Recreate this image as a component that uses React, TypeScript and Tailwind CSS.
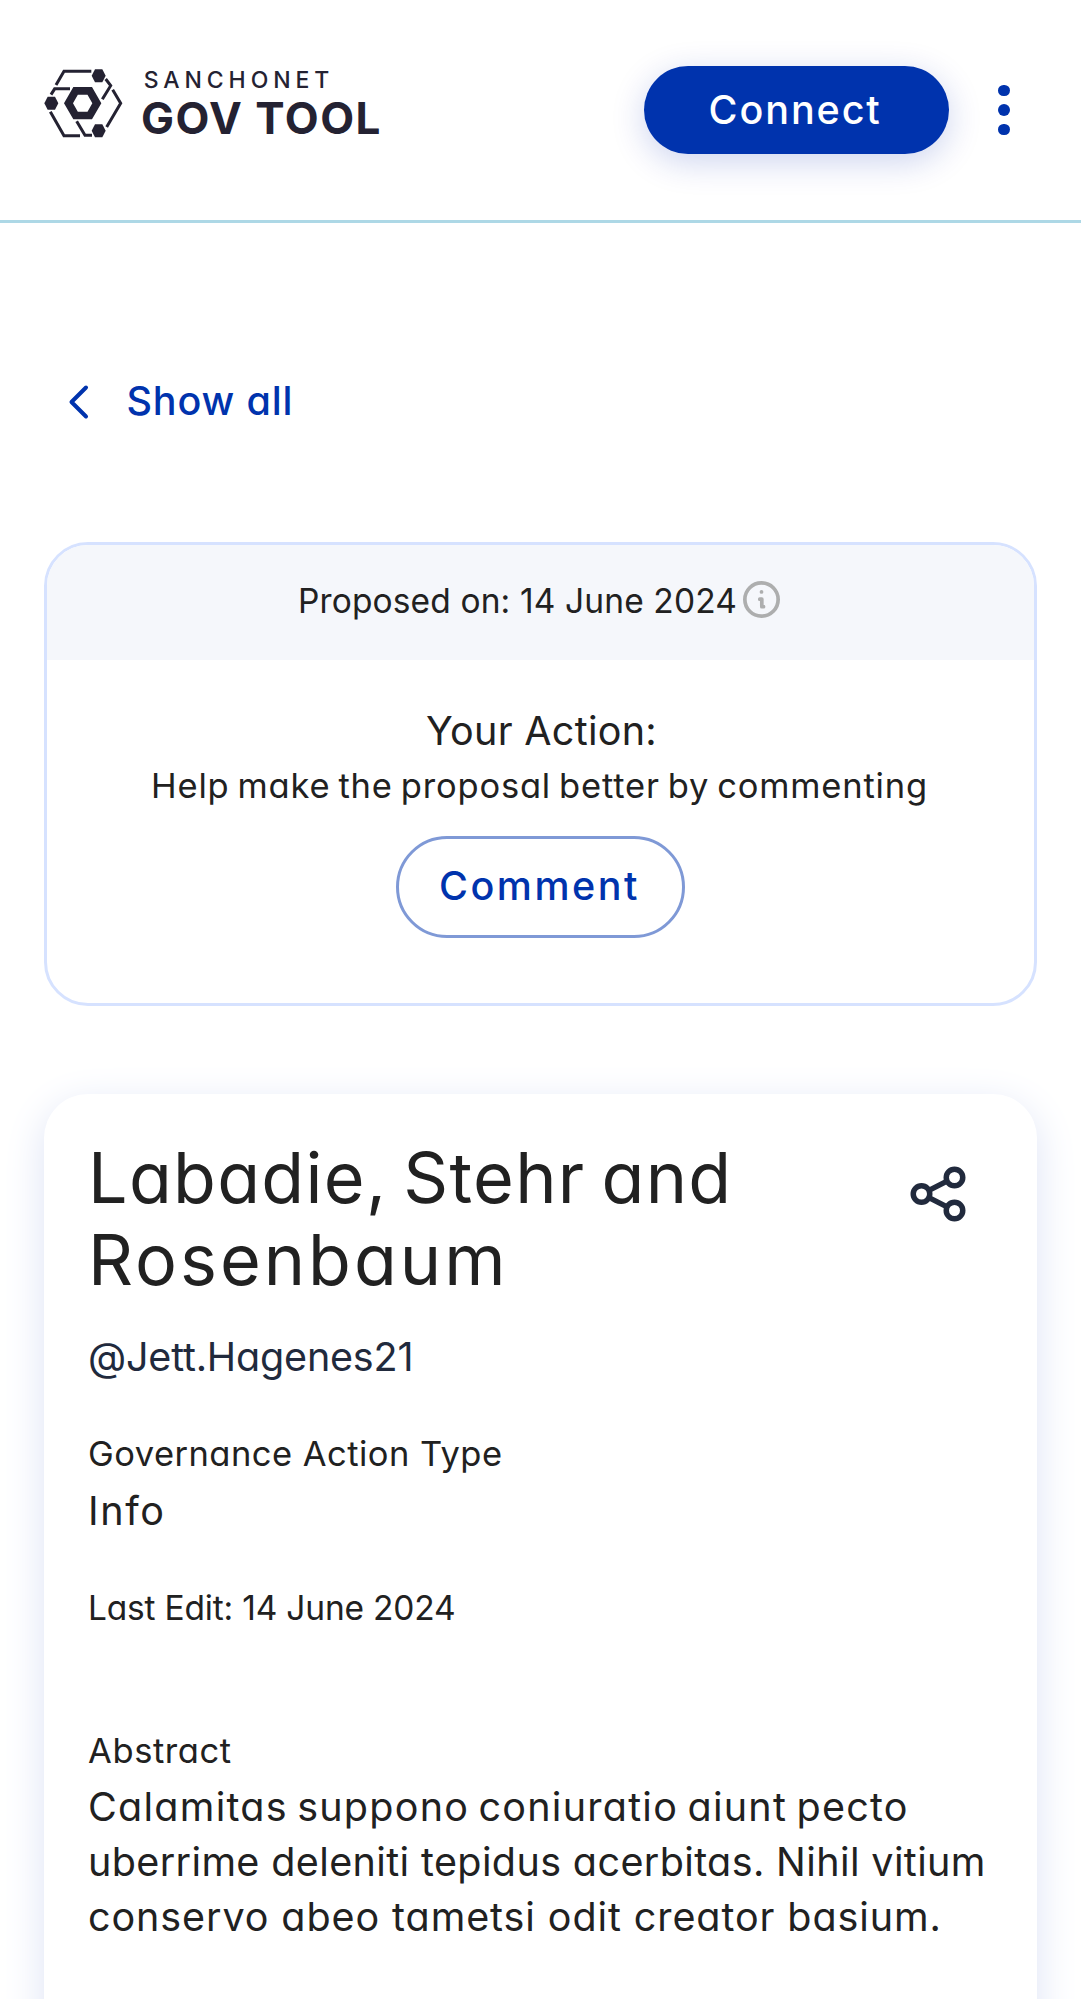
import type { ReactNode } from "react";

function LogoMark() {
  return (
    <svg viewBox="0 0 300 252" className="h-[84px] w-[100px]" aria-hidden="true">
      <g fill="none" stroke="#242232" strokeWidth="9" strokeLinejoin="miter">
        <path d="M60 75 84 33.500H166" />
        <path d="M209 57 224 77 199 118" />
        <path d="M230 89 254 130 212 201" />
        <path d="M45 104 56 86.500H102" />
        <path d="M43 155 84 227H132" />
        <path d="M122 184 147 225.500H168" />
      </g>
      <g fill="#242232">
        <path
          fillRule="evenodd"
          d="M84 129.500 112 81H168L196 129.500 168 178H112ZM111 129.500 125.500 155H154.500L169 129.500 154.500 104H125.500Z"
        />
        <path d="M167 47 177 28H199L209 47 199 67H177Z" />
        <path d="M25 130 35 110.500H57L67 130 57 149.500H35Z" />
        <path d="M167 212 177 192.500H199L209 212 199 231.500H177Z" />
      </g>
    </svg>
  );
}

function InfoIcon() {
  return (
    <svg viewBox="0 0 36 36" className="-mt-[4px] size-[37px]" fill="none" stroke="#adaeae" strokeLinecap="round" strokeLinejoin="round">
      <circle cx="18" cy="18" r="16.200" strokeWidth="3.600" />
      <path d="M16.300 17.700H18.300V25H20" strokeWidth="3.600" />
      <circle cx="18" cy="10.600" r="1.800" fill="#adaeae" stroke="none" />
    </svg>
  );
}

function ShareIcon() {
  return (
    <svg viewBox="0 0 24 24" className="mt-[24px] mr-[22px] size-[66px] shrink-0" fill="none" stroke="#212a3d" strokeWidth="2">
      <circle cx="18" cy="6" r="3" />
      <circle cx="6" cy="12" r="3" />
      <circle cx="18" cy="18" r="3" />
      <path d="m8.700 10.700 6.600-3.400M8.700 13.300l6.600 3.400" />
    </svg>
  );
}

function Label({ className, children }: { className: string; children: ReactNode }) {
  return <p className={`leading-[54px] whitespace-nowrap ${className}`}>{children}</p>;
}

function Header() {
  return (
    <header className="flex h-[223px] justify-between border-b-[3px] border-[#add8e6] pl-9">
      <div className="flex items-start pt-[60px] text-[#242232]">
        <LogoMark />
        <div className="ml-[5px] flex flex-col gap-[6px] pt-[9px] whitespace-nowrap">
          <span className="pl-[2.7px] text-[23px] leading-[22px] font-medium tracking-[4.9px]">SANCHONET</span>
          <span className="text-[44px] leading-[43px] font-bold tracking-[1.47px]">GOV TOOL</span>
        </div>
      </div>
      <div className="flex items-center pr-[71.500px]">
        <button className="flex h-22 w-[305.5px] items-center rounded-full bg-[#0033ad] pt-[2px] pl-[65px] text-[39.5px] font-medium tracking-[1.9px] text-white shadow-[0_8px_34px_rgba(0,40,173,0.2)]">
          Connect
        </button>
        <div className="ml-[49px] flex flex-col gap-2">
          <span className="size-[11.400px] rounded-full bg-[#0033ad]" />
          <span className="size-[11.400px] rounded-full bg-[#0033ad]" />
          <span className="size-[11.400px] rounded-full bg-[#0033ad]" />
        </div>
      </div>
    </header>
  );
}

function ActionCard() {
  return (
    <section className="mt-[117px] h-[464px] overflow-hidden rounded-[44px] border-3 border-[#d6e2ff]">
      <div className="flex h-[115px] items-center justify-center gap-[6px] bg-[#f5f7fb] pr-[3px] pb-[3px]">
        <Label className="text-[33.5px] tracking-[0.13px]">Proposed on: 14 June 2024</Label>
        <InfoIcon />
      </div>
      <div className="flex flex-col items-center pt-[44px]">
        <p className="pl-[2px] text-[39.5px] leading-[55px] tracking-[0.3px]">Your Action:</p>
        <Label className="pr-[2px] text-[34.5px] tracking-[0.82px] [word-spacing:-2.500px]">Help make the proposal better by commenting</Label>
        <button className="mt-[23px] flex h-[102px] w-[289px] items-center rounded-full border-3 border-[#7f99d6] pb-[1px] pl-[40px] text-[39.5px] font-medium tracking-[2.5px] text-[#0033ad]">
          Comment
        </button>
      </div>
    </section>
  );
}

function ProposalCard() {
  return (
    <section className="mt-[88px] h-[1000px] rounded-[44px] bg-white px-11 pt-[43px] shadow-[0_11px_41px_#dde3f5]">
      <div className="flex items-start justify-between">
        <h1 className="text-[70px] leading-[82px] whitespace-nowrap">
          <span className="block tracking-[1.3px] [word-spacing:-5px]">Labadie, Stehr and</span>
          <span className="block tracking-[3px]">Rosenbaum</span>
        </h1>
        <ShareIcon />
      </div>
      <p className="mt-[29px] text-[39.5px] leading-[55px] tracking-[-0.19px] text-[#212a3d]">@Jett.Hagenes21</p>
      <Label className="mt-[42px] text-[34.5px] tracking-[0.47px]">Governance Action Type</Label>
      <p className="mt-[3px] text-[39.5px] leading-[55px] tracking-[1.6px]">Info</p>
      <Label className="mt-[42px] text-[33.5px] tracking-[-0.19px]">Last Edit: 14 June 2024</Label>
      <Label className="mt-[89px] text-[34.5px] tracking-[0.6px]">Abstract</Label>
      <p className="mt-[2px] text-[39.5px] leading-[55px] whitespace-nowrap">
        <span className="block tracking-[1.25px] [word-spacing:-3px]">Calamitas suppono coniuratio aiunt pecto</span>
        <span className="block tracking-[0.38px]">uberrime deleniti tepidus acerbitas. Nihil vitium</span>
        <span className="block tracking-[0.91px]">conservo abeo tametsi odit creator basium.</span>
      </p>
    </section>
  );
}

export default function App() {
  return (
    <div className="h-[1999px] overflow-hidden bg-white font-['Inter',sans-serif] text-[#212121] [font-feature-settings:'cv11']">
      <Header />
      <main className="px-11 pt-[155px]">
        <a className="flex h-[47px] items-center text-[39.5px] font-medium tracking-[0.84px] text-[#0033ad]">
          <svg viewBox="0 0 24 40" className="ml-[22px] h-10 w-6" fill="none" stroke="currentColor" strokeWidth="4" strokeLinecap="round" strokeLinejoin="round">
            <path d="M20 5.500 5.500 20 20 34.500" />
          </svg>
          <span className="ml-[36.500px]">Show all</span>
        </a>
        <ActionCard />
        <ProposalCard />
      </main>
    </div>
  );
}
